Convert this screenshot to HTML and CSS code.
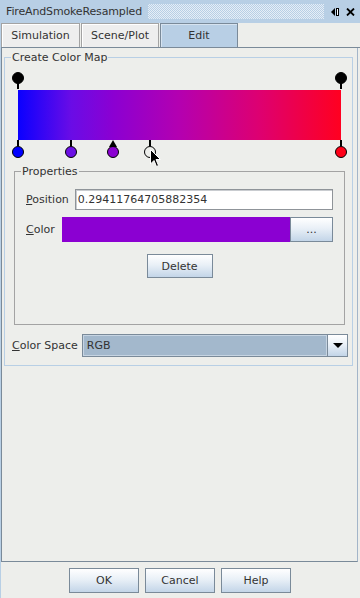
FILE: index.html
```html
<!DOCTYPE html>
<html lang="en">
<head>
    <meta charset="UTF-8">
    <meta name="viewport" content="width=device-width, initial-scale=1.0">
    <title>FireAndSmokeResampled</title>
    <link rel="stylesheet" href="styles.css">
</head>
<body>
<div class="window">
    <!-- Title bar -->
    <div class="titlebar">
        <span class="title">FireAndSmokeResampled</span>
        <span class="bumps"></span>
        <svg class="dock" width="8" height="8" viewBox="0 0 8 8">
            <polygon points="0,4 4,0 4,8" fill="#000"/>
            <rect x="5" y="0" width="3" height="8" fill="#000"/>
            <rect x="6" y="1" width="1" height="6" fill="#fff"/>
        </svg>
        <svg class="close" width="9" height="8" viewBox="0 0 9 8">
            <path d="M1 0.5 L8 7.5 M8 0.5 L1 7.5" stroke="#000" stroke-width="1.8"/>
        </svg>
    </div>

    <!-- Tabs -->
    <div class="tabs">
        <div class="tab">Simulation</div>
        <div class="tab">Scene/Plot</div>
        <div class="tab selected">Edit</div>
    </div>

    <div class="content">
        <div class="group map-group">
            <span class="group-title">Create Color Map</span>

            <div class="map">
                <div class="bar"></div>
                <div class="knob top" style="left: 13px"><div class="dot"></div></div>
                <div class="knob top" style="left: 336px"><div class="dot"></div></div>
                <div class="knob bottom" style="left: 13px"><div class="dot" style="background: #0000ff"></div></div>
                <div class="knob bottom" style="left: 66px"><div class="dot" style="background: #6c10e4"></div></div>
                <div class="knob bottom active" style="left: 108px"><div class="dot" style="background: #8b00d2"></div></div>
                <div class="knob bottom hollow" style="left: 145px"><div class="dot"></div></div>
                <div class="knob bottom" style="left: 336px"><div class="dot" style="background: #ff0018"></div></div>
                <svg class="cursor" width="12" height="19" viewBox="0 0 12 19">
                    <path d="M0.5 0.5 L0.5 15 L4 11.5 L6.5 17.5 L8.5 16.5 L6 10.5 L10.5 10.5 Z" fill="#000" stroke="#fff" stroke-width="1"/>
                </svg>
            </div>

            <div class="group props">
                <span class="group-title">Properties</span>
                <div class="row">
                    <label><u>P</u>osition</label>
                    <div class="field">0.29411764705882354</div>
                </div>
                <div class="row color-row">
                    <label><u>C</u>olor</label>
                    <div class="swatch"></div>
                    <button class="btn more">...</button>
                </div>
                <div class="row center">
                    <button class="btn delete">Delete</button>
                </div>
            </div>

            <div class="row space-row">
                <label><u>C</u>olor Space</label>
                <div class="combo">
                    <span class="combo-value">RGB</span>
                    <span class="combo-arrow"></span>
                </div>
            </div>
        </div>
    </div>

    <div class="footer">
        <button class="btn dialog">OK</button>
        <button class="btn dialog">Cancel</button>
        <button class="btn dialog">Help</button>
    </div>
</div>
</body>
</html>
```

FILE: styles.css
```css
* { box-sizing: border-box; }

body {
    margin: 0;
    background-color: #edeeeb;
    font-family: 'DejaVu Sans', 'Liberation Sans', sans-serif;
    font-size: 11px;
    color: #333;
}

.window {
    width: 360px;
    height: 598px;
    border-left: 1px solid #b8cfe5;
    overflow: hidden;
}

/* title bar */
.titlebar {
    height: 23px;
    background-color: #b8cfe5;
    display: flex;
    align-items: center;
    padding-left: 5px;
}

.title {
    font-size: 11px;
    color: #333;
    letter-spacing: -0.15px;
}

.bumps {
    flex: 1;
    height: 15px;
    margin: 0 7px 0 6px;
    background-color: #b8cfe5;
    background-image: repeating-conic-gradient(#e6eef7 0 25%, transparent 0 50%);
    background-size: 2px 2px;
}

.dock { margin-right: 7px; }
.close { margin-right: 5px; }

/* tabs */
.tabs {
    height: 25px;
    display: flex;
    gap: 1px;
    border-bottom: 1px solid #7a8a99;
}

.tab {
    width: 78px;
    height: 24px;
    border: 1px solid #a3a3a3;
    border-bottom: none;
    box-shadow: inset 1px 1px 0 #fff;
    background-color: #eeeeee;
    display: flex;
    align-items: center;
    justify-content: center;
}

.tab:first-child { width: 79px; }

.tab.selected {
    background-color: #b8cfe5;
    border-color: #7a8a99;
    box-shadow: inset 1px 1px 0 #d6e3f0;
}

/* main panel */
.content {
    height: 514px;
    margin-right: 2px;
    padding: 0 4px 0 2px;
    border-left: 1px solid #7a8a99;
    border-right: 1px solid #a3b5c9;
    border-bottom: 1px solid #7a8a99;
    overflow: hidden;
}

.group {
    position: relative;
    border: 1px solid #b8cfe5;
}

.group-title {
    position: absolute;
    top: -7px;
    left: 6px;
    line-height: 13px;
    padding: 0 1px;
    background-color: #edeeeb;
}

.map-group {
    margin-top: 9px;
    padding-bottom: 8px;
}

/* colour map */
.map {
    position: relative;
    height: 101px;
    padding: 32px 0 0 13px;
}

.bar {
    width: 323px;
    height: 50px;
    background: linear-gradient(90deg, #0a00ff 0%, #6a0ce6 16.5%, #8b00d2 29.4%, #b400b0 50%, #de0070 75%, #ff0020 100%);
}

.knob {
    position: absolute;
    width: 12px;
    height: 18px;
    margin-left: -6px;
}

.knob .dot {
    width: 12px;
    height: 12px;
    border: 1px solid #000;
    border-radius: 50%;
    background-color: #000;
}

.knob::after {
    content: '';
    position: absolute;
    left: 5px;
    width: 2px;
    height: 6px;
    background-color: #000;
}

.knob.top { top: 14px; }
.knob.top::after { top: 11px; }

.knob.bottom { top: 82px; padding-top: 6px; }
.knob.bottom::after { top: 0; }

.knob.active::after {
    left: 2px;
    top: 0;
    width: 0;
    height: 0;
    background: none;
    border-left: 4px solid transparent;
    border-right: 4px solid transparent;
    border-bottom: 7px solid #000;
}

.knob.hollow .dot { background-color: #edeeeb; }

.cursor {
    position: absolute;
    left: 145px;
    top: 91px;
}

/* properties */
.props {
    margin: 12px 7px 0 9px;
    padding: 17px 11px 46px 11px;
    border-color: #a3a3a3;
}

.row {
    display: flex;
    align-items: center;
    gap: 6px;
}

.field {
    flex: 1;
    height: 21px;
    padding-left: 2px;
    line-height: 19px;
    background-color: #fff;
    border: 1px solid #8f9499;
    box-shadow: inset 1px 1px 0 #c9ccd0;
}

.color-row {
    margin-top: 7px;
    gap: 0;
}

.color-row label { width: 36px; }

.swatch {
    width: 228px;
    height: 25px;
    background-color: #8b00d2;
}

.btn {
    font-family: 'DejaVu Sans', 'Liberation Sans', sans-serif;
    font-size: 11px;
    color: #333;
    border: 1px solid #7a8a99;
    background: linear-gradient(to bottom, #ffffff 0%, #e9f0f7 45%, #c3d5e8 100%);
    padding: 0;
}

.more {
    width: 43px;
    height: 25px;
}

.center {
    justify-content: center;
    margin-top: 12px;
}

.delete {
    width: 66px;
    height: 24px;
}

/* colour space */
.space-row {
    margin: 9px 4px 0 7px;
    gap: 4px;
}

.combo {
    flex: 1;
    height: 23px;
    display: flex;
    border: 1px solid #7a8a99;
}

.combo-value {
    flex: 1;
    padding-left: 3px;
    line-height: 19px;
    background-color: #a3b8cc;
    border: 1px solid #c6d4e2;
}

.combo-arrow {
    width: 20px;
    border-left: 1px solid #7a8a99;
    background: linear-gradient(to bottom, #ffffff 0%, #e9f0f7 45%, #c3d5e8 100%);
    position: relative;
}

.combo-arrow::after {
    content: '';
    position: absolute;
    left: 5px;
    top: 8px;
    border-left: 5px solid transparent;
    border-right: 5px solid transparent;
    border-top: 5px solid #000;
}

/* dialog buttons */
.footer {
    display: flex;
    justify-content: center;
    gap: 6px;
    padding-top: 6px;
    padding-right: 1px;
}

.dialog {
    width: 70px;
    height: 25px;
}
```
